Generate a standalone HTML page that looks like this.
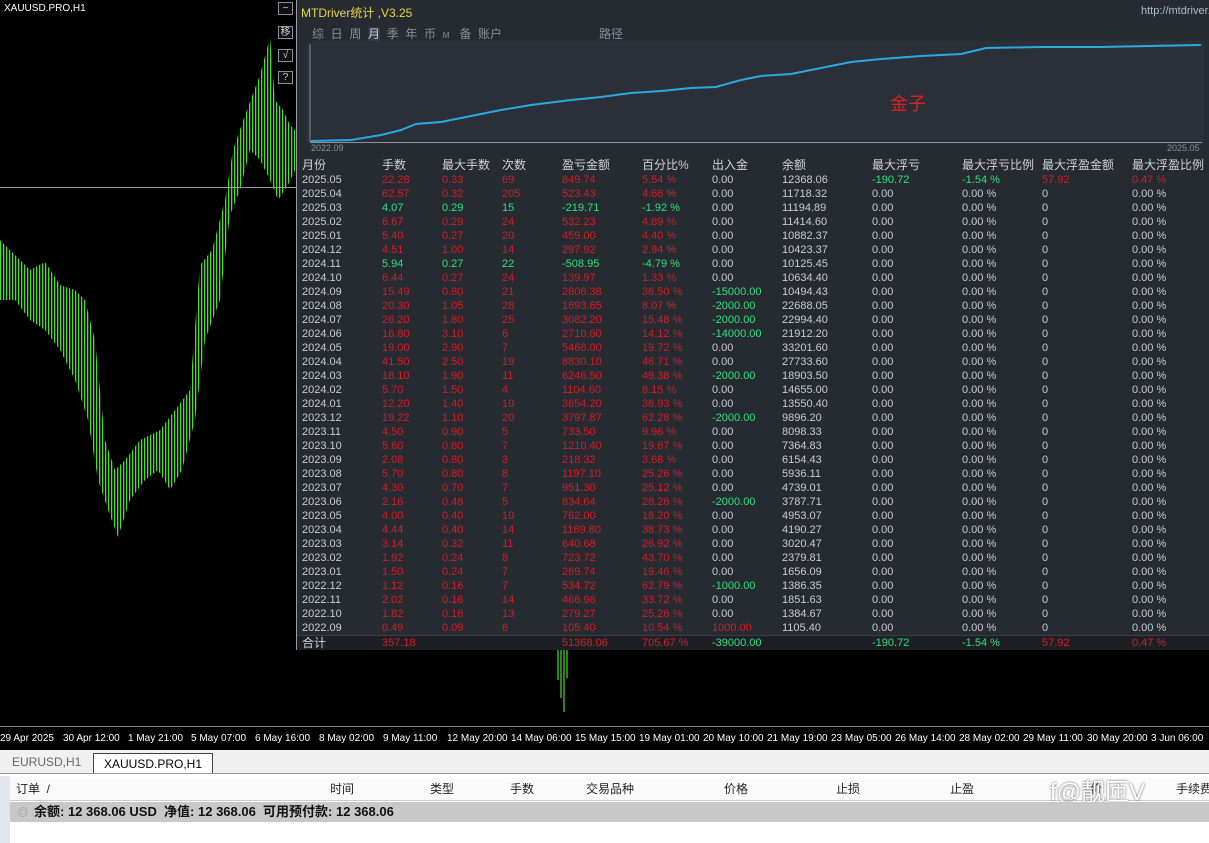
<!DOCTYPE html><html><head><meta charset="utf-8"><style>
*{margin:0;padding:0;box-sizing:border-box}
body{width:1209px;height:843px;overflow:hidden;background:#000;font-family:"Liberation Sans","Noto Sans CJK SC",sans-serif;position:relative}
.a{position:absolute;white-space:nowrap}
#panel{position:absolute;left:296px;top:0;width:913px;height:650px;background:#262a31;border-left:1px solid #9a9ea6;border-bottom:1px solid #9a9ea6}
.btn{position:absolute;left:278px;width:15px;height:13px;border:1px solid #8a8e96;color:#cfd3da;font-size:10px;text-align:center;line-height:11px;background:#111}
.t{position:absolute;font-size:11px;line-height:14px;color:#c9ccd1}
.r{color:#d41e24}.g{color:#2fe07c}
.hdr{font-size:12px;color:#d0d3d8}
.tab{position:absolute;top:752px;height:20px;font-size:12px;line-height:20px;padding:0 10px}
</style></head><body>
<svg class="a" style="left:0;top:0" width="300" height="730">
<defs><pattern id="p" width="3" height="10" patternUnits="userSpaceOnUse"><rect x="0" width="1.3" height="10" fill="#4fd83a"/></pattern></defs>
<polygon fill="url(#p)" points="0,240 15,255 30,270 45,262 60,285 75,290 85,300 95,340 105,440 115,470 125,460 140,440 160,430 175,410 190,390 200,265 212,250 225,200 233,150 245,115 260,75 270,37 275,100 283,110 290,125 295,130 295,170 288,185 278,200 270,180 260,160 250,150 240,190 230,215 220,300 205,340 195,420 182,470 170,490 158,470 145,480 130,500 118,537 108,510 98,480 88,420 75,380 60,350 45,330 30,320 15,300 0,300"/>
<line x1="0" y1="187.5" x2="296" y2="187.5" stroke="#9a9a9a"/>
</svg>
<div class="a" style="left:4px;top:3px;color:#fff;font-size:10px">XAUUSD.PRO,H1</div>
<div class="btn" style="top:2px">−</div><div class="btn" style="top:26px">移</div><div class="btn" style="top:49px">√</div><div class="btn" style="top:71px">?</div>
<svg class="a" style="left:555px;top:648px" width="20" height="70"><g stroke="#4fd83a" stroke-width="1.2"><line x1="3" y1="2" x2="3" y2="32"/><line x1="6" y1="2" x2="6" y2="50"/><line x1="9" y1="2" x2="9" y2="64"/><line x1="12" y1="2" x2="12" y2="30"/></g></svg>
<div id="panel">
<div class="a" style="left:4px;top:4px;color:#e8d44a;font-size:12px">MTDriver统计 ,V3.25</div>
<div class="a" style="left:844px;top:5px;color:#aebad0;font-size:11px">http://mtdriver...</div>
<div class="a" style="left:15px;top:25px;color:#8a8e95;font-size:12px;word-spacing:0">综&nbsp; 日&nbsp; 周&nbsp; <span style="color:#cfd3da;background:#353a44">月</span>&nbsp; 季&nbsp; 年&nbsp; 币&nbsp; <span style="font-size:8px">M</span>&nbsp;&nbsp; 备&nbsp; 账户</div>
<div class="a" style="left:302px;top:25px;color:#8a8e95;font-size:12px">路径</div>
<div class="a" style="left:9px;top:41px;width:898px;height:103px;background:#2b2f37"></div>
<svg class="a" style="left:0;top:0" width="913" height="160">
<line x1="13" y1="44" x2="13" y2="142" stroke="#8a8e96"/><line x1="13" y1="142.5" x2="905" y2="142.5" stroke="#8a8e96"/>
<polyline fill="none" stroke="#2aa8e0" stroke-width="2" points="14,141 54,140 84,135 104,130 119,124 144,122 174,116 204,110 234,105 274,100 304,97 334,93 364,91 394,88 419,87 444,80 464,76 494,74 534,66 554,62 584,59 624,56 664,54 689,48 744,47 804,47 904,45"/>
</svg>
<div class="a" style="left:14px;top:143px;color:#8a8e95;font-size:9px">2022.09</div>
<div class="a" style="left:870px;top:143px;color:#8a8e95;font-size:9px">2025.05</div>
<div class="a" style="left:593px;top:90px;color:#e02020;font-size:18px">金子</div>
<div class="a" style="left:0;top:635px;width:913px;height:15px;background:#1d1f24;border-top:1px solid #3a3e46"></div>
<div id="tbl"></div>
</div>
<div class="a" style="left:0;top:726px;width:1209px;height:1px;background:#888"></div>
<div class="a" style="left:0;top:733px;color:#fff;font-size:10px;word-spacing:0">
<span class="a" style="left:0">29 Apr 2025</span><span class="a" style="left:63px">30 Apr 12:00</span><span class="a" style="left:128px">1 May 21:00</span><span class="a" style="left:191px">5 May 07:00</span><span class="a" style="left:255px">6 May 16:00</span><span class="a" style="left:319px">8 May 02:00</span><span class="a" style="left:383px">9 May 11:00</span><span class="a" style="left:447px">12 May 20:00</span><span class="a" style="left:511px">14 May 06:00</span><span class="a" style="left:575px">15 May 15:00</span><span class="a" style="left:639px">19 May 01:00</span><span class="a" style="left:703px">20 May 10:00</span><span class="a" style="left:767px">21 May 19:00</span><span class="a" style="left:831px">23 May 05:00</span><span class="a" style="left:895px">26 May 14:00</span><span class="a" style="left:959px">28 May 02:00</span><span class="a" style="left:1023px">29 May 11:00</span><span class="a" style="left:1087px">30 May 20:00</span><span class="a" style="left:1151px">3 Jun 06:00</span></div>
<div class="a" style="left:0;top:750px;width:1209px;height:93px;background:#fff"></div>
<div class="a" style="left:0;top:750px;width:1209px;height:24px;background:#f0f0f0;border-bottom:1px solid #999"></div>
<div class="tab" style="left:2px;color:#666">EURUSD,H1</div>
<div class="tab" style="left:93px;top:753px;background:#fff;border:1px solid #444;border-bottom:none;color:#000">XAUUSD.PRO,H1</div>
<div class="a" style="left:0;top:776px;width:10px;height:67px;background:#dfe6ef"></div>
<div class="a" style="left:10px;top:778px;width:1199px;height:23px;background:#fafafa;border-bottom:1px solid #ccc;font-size:12px;color:#222;line-height:23px">
<span class="a" style="left:6px">订单&nbsp; /</span><span class="a" style="left:320px">时间</span><span class="a" style="left:420px">类型</span><span class="a" style="left:500px">手数</span><span class="a" style="left:576px">交易品种</span><span class="a" style="left:714px">价格</span><span class="a" style="left:826px">止损</span><span class="a" style="left:940px">止盈</span><span class="a" style="left:1080px">价</span><span class="a" style="left:1166px">手续费</span></div>
<div class="a" style="left:1050px;top:772px;font-size:24px;color:#fff;text-shadow:0 0 2px #555">f@靓匝V</div>
<div class="a" style="left:10px;top:802px;width:1199px;height:20px;background:#c8c8c8;font-size:13px;font-weight:bold;line-height:20px;color:#111"><span style="color:#888;font-weight:normal;font-size:10px;margin:0 6px 0 8px">◎</span>余额: 12 368.06 USD&nbsp; 净值: 12 368.06&nbsp; 可用预付款: 12 368.06</div>
<script>
var rows=[
["2025.05","22.28","0.33","69","849.74","5.54 %","0.00","12368.06","-190.72","-1.54 %","57.92","0.47 %",1],
["2025.04","62.57","0.32","205","523.43","4.66 %","0.00","11718.32"],
["2025.03","4.07","0.29","15","-219.71","-1.92 %","0.00","11194.89",,,,,0,1],
["2025.02","6.67","0.29","24","532.23","4.89 %","0.00","11414.60"],
["2025.01","5.40","0.27","20","459.00","4.40 %","0.00","10882.37"],
["2024.12","4.51","1.00","14","297.92","2.94 %","0.00","10423.37"],
["2024.11","5.94","0.27","22","-508.95","-4.79 %","0.00","10125.45",,,,,0,1],
["2024.10","6.44","0.27","24","139.97","1.33 %","0.00","10634.40"],
["2024.09","15.49","0.80","21","2806.38","36.50 %","-15000.00","10494.43"],
["2024.08","20.30","1.05","28","1693.65","8.07 %","-2000.00","22688.05"],
["2024.07","26.20","1.80","25","3082.20","15.48 %","-2000.00","22994.40"],
["2024.06","16.80","3.10","6","2710.60","14.12 %","-14000.00","21912.20"],
["2024.05","19.00","2.90","7","5468.00","19.72 %","0.00","33201.60"],
["2024.04","41.50","2.50","19","8830.10","46.71 %","0.00","27733.60"],
["2024.03","18.10","1.90","11","6246.50","49.38 %","-2000.00","18903.50"],
["2024.02","5.70","1.50","4","1104.60","8.15 %","0.00","14655.00"],
["2024.01","12.20","1.40","10","3654.20","36.93 %","0.00","13550.40"],
["2023.12","19.22","1.10","20","3797.87","62.28 %","-2000.00","9896.20"],
["2023.11","4.50","0.90","5","733.50","9.96 %","0.00","8098.33"],
["2023.10","5.60","0.80","7","1210.40","19.67 %","0.00","7364.83"],
["2023.09","2.08","0.80","3","218.32","3.68 %","0.00","6154.43"],
["2023.08","5.70","0.80","8","1197.10","25.26 %","0.00","5936.11"],
["2023.07","4.30","0.70","7","951.30","25.12 %","0.00","4739.01"],
["2023.06","2.16","0.48","5","834.64","28.26 %","-2000.00","3787.71"],
["2023.05","4.00","0.40","10","762.00","18.20 %","0.00","4953.07"],
["2023.04","4.44","0.40","14","1169.80","38.73 %","0.00","4190.27"],
["2023.03","3.14","0.32","11","640.68","26.92 %","0.00","3020.47"],
["2023.02","1.92","0.24","8","723.72","43.70 %","0.00","2379.81"],
["2023.01","1.50","0.24","7","269.74","19.46 %","0.00","1656.09"],
["2022.12","1.12","0.16","7","534.72","62.79 %","-1000.00","1386.35"],
["2022.11","2.02","0.16","14","466.96","33.72 %","0.00","1851.63"],
["2022.10","1.82","0.16","13","279.27","25.26 %","0.00","1384.67"],
["2022.09","0.49","0.09","6","105.40","10.54 %","1000.00","1105.40"]];
var X=[5,85,145,205,265,345,415,485,575,665,745,835];
var H=["月份","手数","最大手数","次数","盈亏金额","百分比%","出入金","余额","最大浮亏","最大浮亏比例","最大浮盈金额","最大浮盈比例"];
var h="";
H.forEach(function(s,i){h+='<div class="t hdr" style="left:'+X[i]+'px;top:158px">'+s+'</div>'});
rows.forEach(function(r,k){var y=173+k*14;var neg=r[13];
for(var i=0;i<12;i++){var v=r[i];var c="";
if(i==0)c="";else if(i<6)c=neg?"g":"r";else if(i==6)c=v.charAt(0)=="-"?"g":(v=="0.00"?"":"r");else if(i==7)c="";
else{if(r[12]){c=i<10?"g":"r"}else{v=["0.00","0.00 %","0","0.00 %"][i-8]}}
h+='<div class="t '+c+'" style="left:'+X[i]+'px;top:'+y+'px">'+v+'</div>'}});
var tot=["合计","357.18","","","51368.06","705.67 %","-39000.00","","-190.72","-1.54 %","57.92","0.47 %"];
var tc=["hdr","r","","","r","r","g","","g","g","r","r"];
tot.forEach(function(s,i){h+='<div class="t '+tc[i]+'" style="left:'+X[i]+'px;top:636px">'+s+'</div>'});
document.getElementById("tbl").innerHTML=h;
</script>
</body></html>
